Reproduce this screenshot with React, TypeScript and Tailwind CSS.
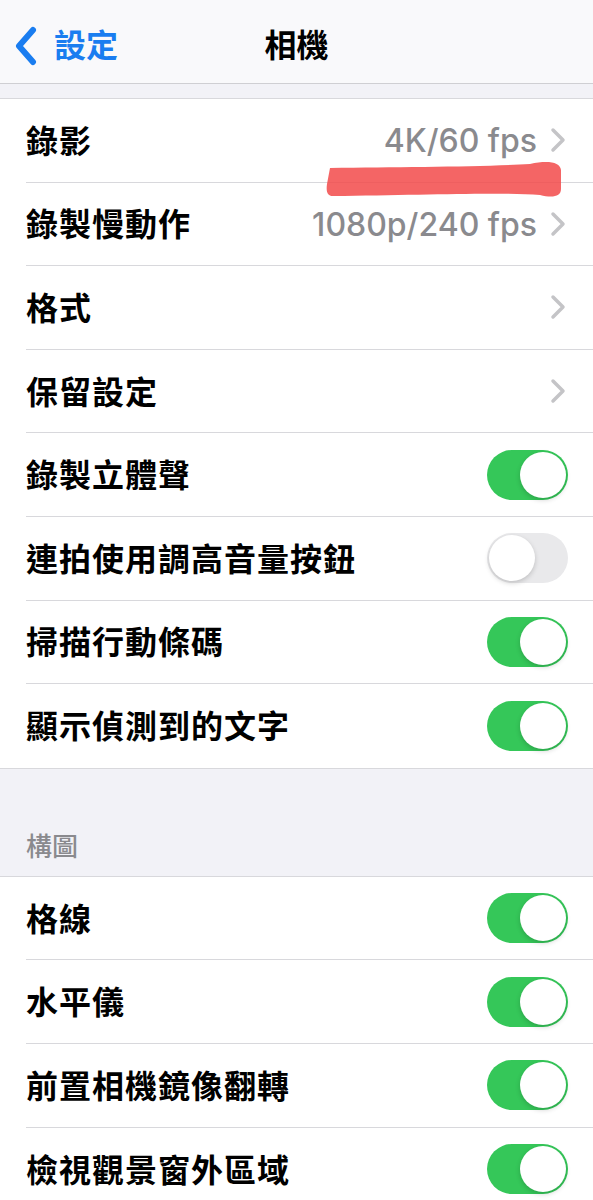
import React from "react";

const font = { fontFamily: '"Inter", "Noto Sans CJK TC", sans-serif' };

const Toggle = ({ on }: { on: boolean }) => (
  <div
    className={`flex w-[81px] h-[50px] rounded-full p-[2px] ${
      on ? "bg-[#35c759] justify-end" : "bg-[#e9e9eb] justify-start"
    }`}
  >
    <div className="w-[46px] h-[46px] rounded-full bg-white shadow-[0_2px_5px_rgba(0,0,0,0.18)]" />
  </div>
);

const Chevron = () => (
  <svg width="18" height="26" viewBox="0 0 18 26" className="ml-[12px]">
    <path
      d="M4 3 L14 13 L4 23"
      fill="none"
      stroke="#c4c4c7"
      strokeWidth="3.5"
      strokeLinecap="round"
      strokeLinejoin="round"
    />
  </svg>
);

type Item = { label: string; value?: string; toggle?: boolean; on?: boolean };

const Row = ({ item, last }: { item: Item; last: boolean }) => (
  <div className="pl-[26px]">
    <div
      className={`flex items-center justify-between h-[83.6px] ${
        item.toggle ? "pr-[25px]" : "pr-[26px]"
      } ${last ? "" : "border-b border-[#d8d8dc]"}`}
    >
      <span className="pt-[3px] text-[32px] font-semibold text-black tracking-[1px]">
        {item.label}
      </span>
      {item.toggle ? (
        <Toggle on={!!item.on} />
      ) : (
        <div className="flex items-center">
          {item.value && (
            <span className="pt-[2px] text-[32px] font-medium text-[#8a8a8e]">
              {item.value}
            </span>
          )}
          <Chevron />
        </div>
      )}
    </div>
  </div>
);

const Section = ({ items }: { items: Item[] }) => (
  <div className="bg-white border-y border-[#d8d8dc]">
    {items.map((it, i) => (
      <Row key={it.label} item={it} last={i === items.length - 1} />
    ))}
  </div>
);

const first: Item[] = [
  { label: "錄影", value: "4K/60 fps" },
  { label: "錄製慢動作", value: "1080p/240 fps" },
  { label: "格式" },
  { label: "保留設定" },
  { label: "錄製立體聲", toggle: true, on: true },
  { label: "連拍使用調高音量按鈕", toggle: true, on: false },
  { label: "掃描行動條碼", toggle: true, on: true },
  { label: "顯示偵測到的文字", toggle: true, on: true },
];

const second: Item[] = [
  { label: "格線", toggle: true, on: true },
  { label: "水平儀", toggle: true, on: true },
  { label: "前置相機鏡像翻轉", toggle: true, on: true },
  { label: "檢視觀景窗外區域", toggle: true, on: true },
];

export default function App() {
  return (
    <div style={font} className="w-[593px] h-[1200px] overflow-hidden bg-[#f2f2f7]">
      {/* nav bar */}
      <div className="relative flex items-center h-[84px] pt-[8px] bg-[#f9f9fb] border-b border-[#cfcfd3]">
        <div className="flex items-center pl-[13px] text-[#1a7df0]">
          <svg width="26" height="40" viewBox="0 0 26 40">
            <path
              d="M20 4 L6 20 L20 36"
              fill="none"
              stroke="#1a7df0"
              strokeWidth="6"
              strokeLinecap="round"
              strokeLinejoin="round"
            />
          </svg>
          <span className="ml-[15px] text-[32px] font-semibold">設定</span>
        </div>
        <div className="absolute inset-0 pt-[8px] flex items-center justify-center pointer-events-none">
          <span className="text-[32px] font-bold text-black">相機</span>
        </div>
      </div>

      <div className="h-[14px]" />

      <div className="relative">
        <Section items={first} />
        {/* highlighter mark */}
        <svg
          className="absolute left-0 top-0 pointer-events-none"
          width="593"
          height="120"
          viewBox="0 0 593 120"
        >
          <path
            d="M330 70 C400 69 480 69 530 66 C548 62 560 64 561 72 L561 91 C561 99 552 100 540 97 C500 94 420 97 333 98 C327 98 326 93 327 86 Z"
            fill="#f24a4a"
            opacity="0.85"
          />
        </svg>
      </div>

      <div className="flex items-end h-[107px] pl-[26px] pb-[10px]">
        <span className="text-[26px] font-medium text-[#8a8a8e]">構圖</span>
      </div>

      <Section items={second} />
    </div>
  );
}
